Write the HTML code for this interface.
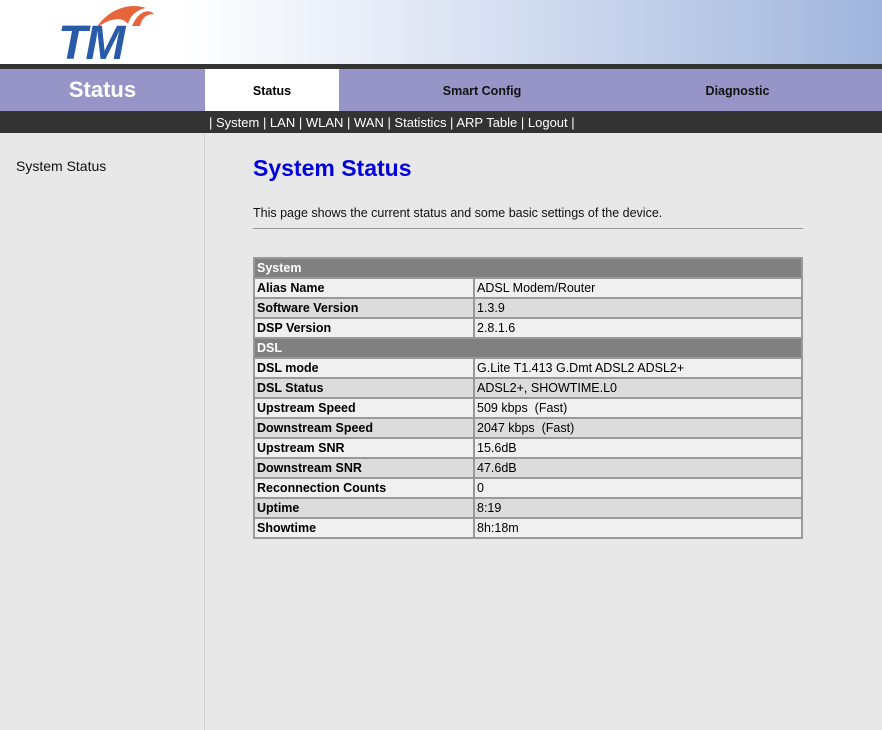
<!DOCTYPE html>
<html><head><style>
body{margin:0;width:882px;height:730px;background:#e8e8e8;font-family:"Liberation Sans",sans-serif;position:relative;overflow:hidden}
#hdr{position:absolute;left:0;top:0;width:882px;height:64px;background:linear-gradient(90deg,#fff 0%,#fff 20%,#e4eaf6 45%,#c8d4ec 68%,#a0b4dc 100%)}
#d1{position:absolute;top:64px;left:0;width:882px;height:5px;background:#333}
#nav{position:absolute;top:69px;left:0;width:882px;height:42px;background:#9795c7}
#sub{position:absolute;top:111px;left:0;width:882px;height:22px;background:#333;color:#fff;font-size:13px}
#side{position:absolute;top:133px;left:0;width:204px;height:597px;border-right:1px solid #d0d0d0;background:#e8e8e8}
table{border-collapse:collapse;position:absolute;left:253px;top:257px;width:550px;font-size:12.5px;border:2px solid #999}
td{border:2px solid #999;height:18px;padding:0 2px;line-height:18px}
tr.h td{background:#808080;color:#fff;font-weight:bold}
td.l{font-weight:bold;width:214px}
tr.a td{background:#f0f0f0}tr.b td{background:#dcdcdc}
</style></head><body>
<div id="hdr">
<svg width="160" height="64" style="position:absolute;left:50px;top:0">
<path d="M46 28 C58 10,78 2,96 8 C86 10,80 16,78 24 C72 16,60 18,46 28Z" fill="#e8643a"/>
<path d="M82 26 C88 12,98 8,104 14 C96 14,92 18,90 26Z" fill="#e8643a"/>
<text x="8" y="59" font-family="Liberation Sans" font-weight="bold" font-style="italic" font-size="48" fill="#2a5ba8" letter-spacing="-2">TM</text>
</svg>
</div>
<div id="d1"></div>
<div id="nav">
<div style="position:absolute;left:0;width:205px;top:0;height:42px;line-height:42px;text-align:center;color:#fff;font-weight:bold;font-size:22px">Status</div>
<div style="position:absolute;left:205px;width:134px;top:0;height:42px;line-height:44px;text-align:center;background:#fff;font-weight:bold;font-size:12.5px">Status</div>
<div style="position:absolute;left:339px;width:286px;top:0;height:42px;line-height:44px;text-align:center;color:#111;font-weight:bold;font-size:12.5px">Smart Config</div>
<div style="position:absolute;left:625px;width:225px;top:0;height:42px;line-height:44px;text-align:center;color:#111;font-weight:bold;font-size:12.5px">Diagnostic</div>
</div>
<div id="sub"><span style="position:absolute;left:209px;top:4px">| System | LAN | WLAN | WAN | Statistics | ARP Table | Logout |</span></div>
<div id="side"><div style="position:absolute;left:16px;top:25px;font-size:14px;color:#111">System Status</div></div>
<div style="position:absolute;left:253px;top:155px;color:#0000dd;font-weight:bold;font-size:23px">System Status</div>
<div style="position:absolute;left:253px;top:206px;font-size:12.5px;color:#111">This page shows the current status and some basic settings of the device.</div>
<div style="position:absolute;left:253px;top:228px;width:550px;height:1px;background:#999"></div>
<table>
<tr class="h"><td colspan="2">System</td></tr>
<tr class="a"><td class="l">Alias Name</td><td>ADSL Modem/Router</td></tr>
<tr class="b"><td class="l">Software Version</td><td>1.3.9</td></tr>
<tr class="a"><td class="l">DSP Version</td><td>2.8.1.6</td></tr>
<tr class="h"><td colspan="2">DSL</td></tr>
<tr class="a"><td class="l">DSL mode</td><td>G.Lite T1.413 G.Dmt ADSL2 ADSL2+</td></tr>
<tr class="b"><td class="l">DSL Status</td><td>ADSL2+, SHOWTIME.L0</td></tr>
<tr class="a"><td class="l">Upstream Speed</td><td>509 kbps &nbsp;(Fast)</td></tr>
<tr class="b"><td class="l">Downstream Speed</td><td>2047 kbps &nbsp;(Fast)</td></tr>
<tr class="a"><td class="l">Upstream SNR</td><td>15.6dB</td></tr>
<tr class="b"><td class="l">Downstream SNR</td><td>47.6dB</td></tr>
<tr class="a"><td class="l">Reconnection Counts</td><td>0</td></tr>
<tr class="b"><td class="l">Uptime</td><td>8:19</td></tr>
<tr class="a"><td class="l">Showtime</td><td>8h:18m</td></tr>
</table>
</body></html>
